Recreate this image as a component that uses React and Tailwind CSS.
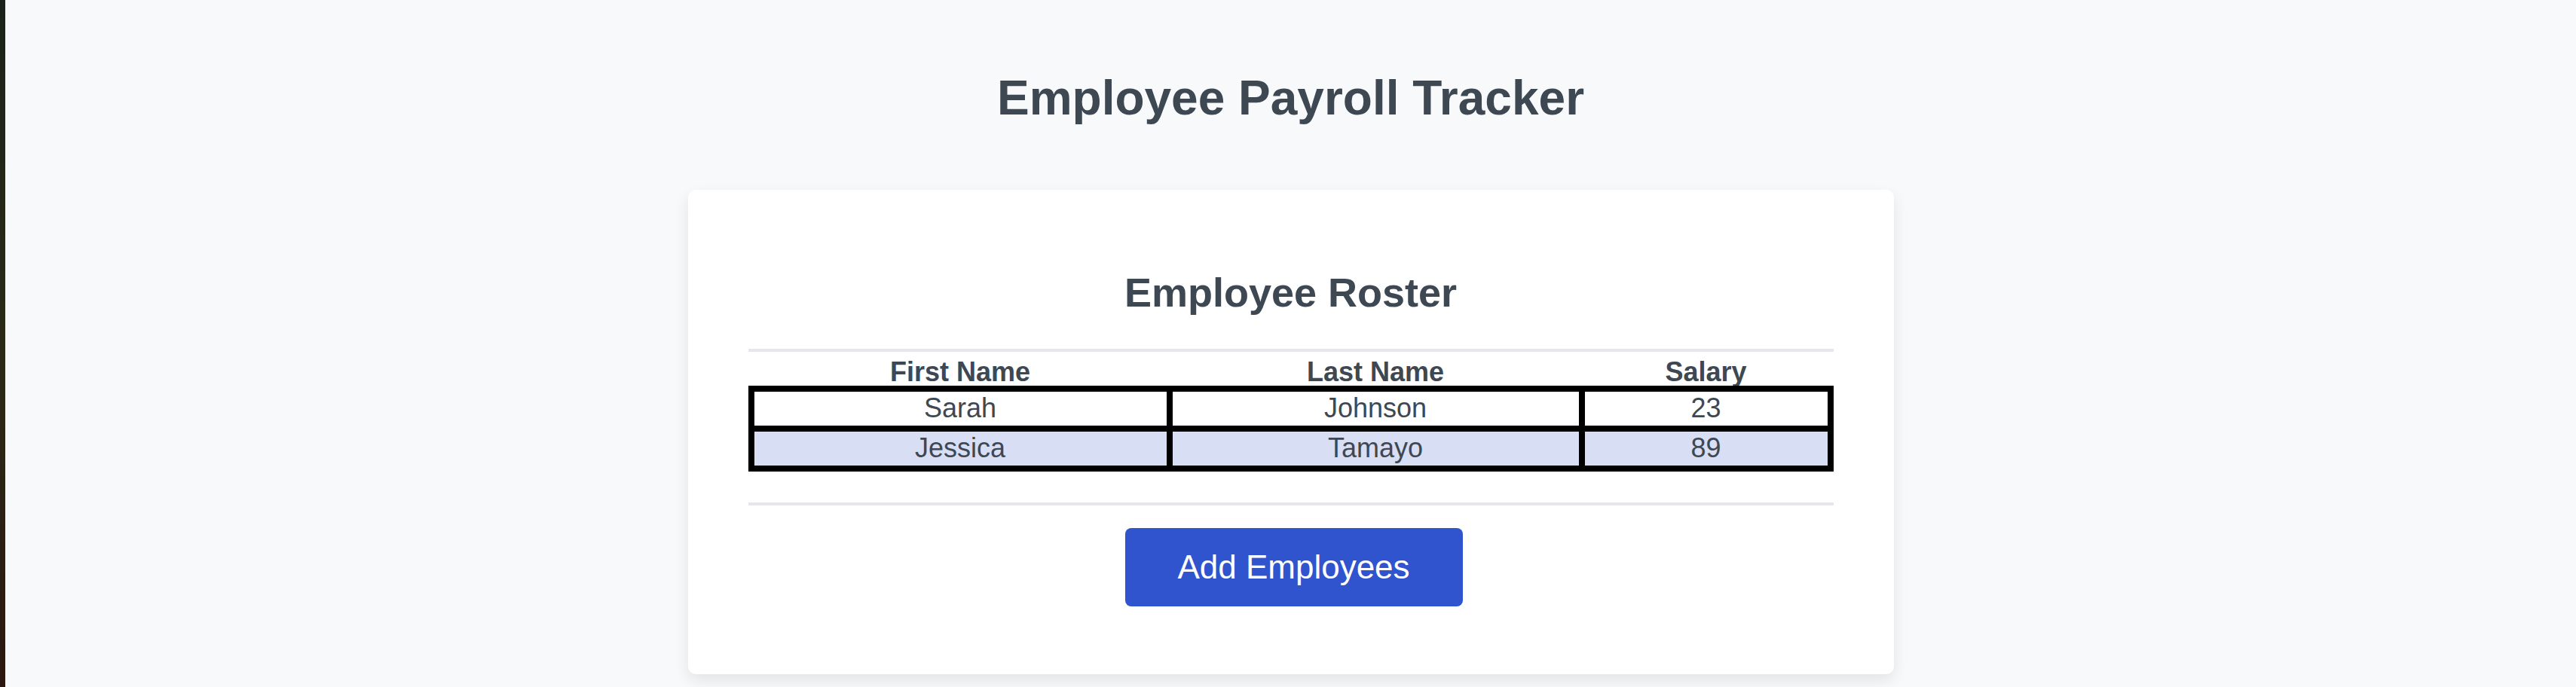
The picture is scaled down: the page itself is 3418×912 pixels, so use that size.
import React from "react";

const employees = [
  { first: "Sarah", last: "Johnson", salary: 23 },
  { first: "Jessica", last: "Tamayo", salary: 89 },
];

const App = () => {
  return (
    <div className="min-h-screen flex font-['Liberation_Sans',Arial,sans-serif] text-[#3d4852]">
      {/* edge of the desktop wallpaper */}
      <div className="w-[7px] shrink-0 bg-gradient-to-b from-[#1c2219] via-[#2b2a1a] to-[#2a1711]"></div>

      <div className="flex-1 bg-[#f8f9fb] flex flex-col items-center pt-[94px] pb-[20px]">
        <h1 className="text-[64px] leading-[1.15] font-bold">Employee Payroll Tracker</h1>

        {/* Roster card */}
        <div className="mt-[84px] w-[1600px] bg-white rounded-[10px] shadow-[0_8px_20px_rgba(0,0,0,0.09)] px-[80px] pt-[105px] pb-[90px] flex flex-col items-center">
          <h2 className="text-[54px] leading-[1.15] font-bold">Employee Roster</h2>

          <div className="mt-[44px] w-full h-[4px] bg-[#e5e7eb]"></div>

          <div className="w-full grid grid-cols-[555px_547px_1fr] px-[4px] h-[45px] items-center text-[36px] font-bold">
            <div className="text-center">First Name</div>
            <div className="text-center">Last Name</div>
            <div className="text-center">Salary</div>
          </div>

          <div className="w-full border-4 border-black">
            {employees.map((emp, i) => (
              <div
                key={emp.first}
                className={`grid grid-cols-[555px_547px_1fr] text-[36px] ${
                  i % 2 === 1 ? "bg-[#d8def3]" : "bg-white"
                }`}
              >
                <div className="h-[53px] border-4 border-black flex items-center justify-center">{emp.first}</div>
                <div className="h-[53px] border-4 border-black flex items-center justify-center">{emp.last}</div>
                <div className="h-[53px] border-4 border-black flex items-center justify-center">{emp.salary}</div>
              </div>
            ))}
          </div>

          <div className="mt-[41px] w-full h-[4px] bg-[#e5e7eb]"></div>

          <button className="mt-[30px] ml-[8px] w-[448px] h-[104px] rounded-[8px] bg-[#2f54cd] text-white text-[44px]">
            Add Employees
          </button>
        </div>
      </div>
    </div>
  );
};

export default App;
